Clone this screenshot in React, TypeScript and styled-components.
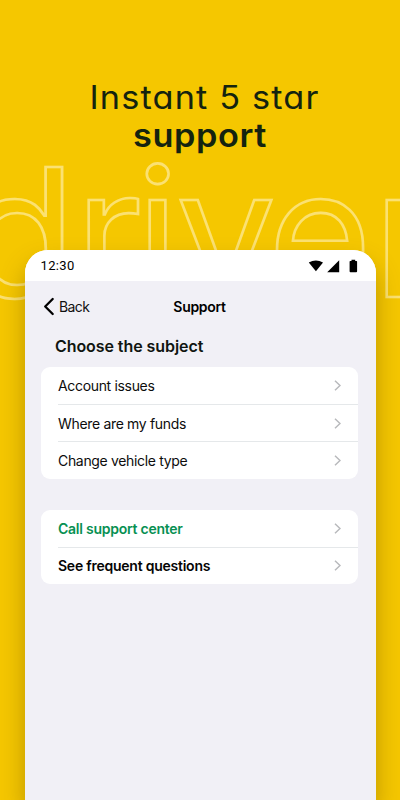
import React from "react";
import styled, { createGlobalStyle, css } from "styled-components";

const GlobalStyle = createGlobalStyle`
  * { box-sizing: border-box; }
  body { margin: 0; background: #f5c700; }
`;

const Page = styled.main`
  position: relative;
  width: 400px;
  height: 800px;
  overflow: hidden;
  background: #f5c700;
  display: flex;
  flex-direction: column;
  align-items: center;
  font-family: Inter, "Liberation Sans", sans-serif;
`;

const Wordmark = styled.svg`
  position: absolute;
  left: 0;
  top: 150px;
  width: 400px;
  height: 160px;

  text {
    font: 430 178px Inter, sans-serif;
    fill: none;
    stroke: #fbe172;
    stroke-width: 2.6px;
  }
`;

const Headline = styled.h1`
  position: relative;
  height: 250px;
  margin: 0;
  padding: 79px 0 0 10px;
  color: #14230f;
  font-size: 32px;
  line-height: 38px;
  font-weight: 400;
  text-align: center;
  white-space: nowrap;
  font-feature-settings: "cv11", "ss03";
`;

const HeadlineRow = styled.span<{ $strong?: boolean }>`
  display: block;
  letter-spacing: ${(p) => (p.$strong ? "0.6px" : "1.1px")};
  font-weight: ${(p) => (p.$strong ? 600 : 420)};
  margin-left: ${(p) => (p.$strong ? "-9px" : "0")};
  transform: scaleX(1.07);
`;

const Phone = styled.section`
  position: relative;
  width: 351px;
  height: 550px;
  flex: none;
  display: flex;
  flex-direction: column;
  border-radius: 23px 23px 0 0;
  background: #f1f0f6;
  box-shadow: 0 14px 24px rgba(110, 80, 0, 0.42);
`;

const StatusBar = styled.div`
  height: 31px;
  flex: none;
  display: flex;
  justify-content: space-between;
  align-items: center;
  padding: 0 18px 0 16px;
  border-radius: 23px 23px 0 0;
  background: #fff;
  font-family: Roboto, sans-serif;
  font-size: 13px;
  font-weight: 450;
  letter-spacing: 0.35px;
  color: #000;
`;

const StatusIcons = styled.svg`
  width: 50px;
  height: 14px;
`;

const NavBar = styled.nav`
  height: 50px;
  flex: none;
  display: grid;
  grid-template-columns: 1fr auto 1fr;
  align-items: center;
  padding: 0 19px 0 18px;
`;

const Back = styled.div`
  display: flex;
  align-items: center;
  gap: 4.5px;
  font-size: 14px;
  letter-spacing: -0.6px;
  color: #111;
`;

const BackIcon = styled.svg`
  width: 12px;
  height: 19px;
`;

const NavTitle = styled.div`
  font-size: 14px;
  font-weight: 600;
  letter-spacing: -0.3px;
`;

const Subject = styled.h2`
  height: 36px;
  flex: none;
  margin: 0 0 0 30.5px;
  font-size: 16px;
  line-height: 31px;
  font-weight: 600;
  letter-spacing: -0.07px;
  color: #101510;
`;

const List = styled.div`
  flex: none;
  width: 317px;
  margin: 0 0 31px 16.5px;
  padding-left: 17px;
  border-radius: 9px;
  background: #fff;
`;

const tones = {
  plain: css`
    font-weight: 400;
    color: #0c0c0c;
    letter-spacing: -0.33px;
  `,
  green: css`
    font-weight: 600;
    color: #079052;
    letter-spacing: -0.25px;
  `,
  strong: css`
    font-weight: 600;
    color: #050505;
    letter-spacing: -0.24px;
  `,
};

const Row = styled.div<{ $tone: keyof typeof tones }>`
  height: 37.2px;
  display: flex;
  align-items: center;
  justify-content: space-between;
  padding: 0 17px 0 0;
  font-size: 14px;
  ${(p) => tones[p.$tone]}

  & + & {
    border-top: 1px solid #e5e8ea;
  }
`;

const ChevronIcon = styled.svg`
  width: 7px;
  height: 11px;
`;

const Item = ({ label, tone = "plain" }: { label: string; tone?: keyof typeof tones }) => (
  <Row $tone={tone}>
    <span>{label}</span>
    <ChevronIcon viewBox="0 0 7 11">
      <path d="M1 .8 6 5.5 1 10.2" fill="none" stroke="#b8b9bc" strokeWidth="1.5" />
    </ChevronIcon>
  </Row>
);

export default function App() {
  return (
    <Page>
      <GlobalStyle />
      <Wordmark>
        <text transform="translate(-38 147) scale(1.05 1)">d</text>
        <text y="147" x="75 136 176 268 373">river</text>
      </Wordmark>
      <Headline>
        <HeadlineRow>Instant 5 star</HeadlineRow>
        <HeadlineRow $strong>support</HeadlineRow>
      </Headline>
      <Phone>
        <StatusBar>
          <span>12:30</span>
          <StatusIcons viewBox="0 0 50 14">
            <path d="M.8 3.5Q7.8-.7 15 3.5L7.9 12.2Z" />
            <path d="M19.2 13.2H31.2V1.2Z" />
            <path d="M43.5.7h3.7v1.2h1.2q.7 0 .7.7v9.7q0 .9-.9.9h-5.7q-.9 0-.9-.9V2.6q0-.7.7-.7h1.2Z" />
          </StatusIcons>
        </StatusBar>
        <NavBar>
          <Back>
            <BackIcon viewBox="0 0 12 19">
              <path
                d="M9.7 2 2.2 9.5 9.7 17"
                fill="none"
                stroke="#000"
                strokeWidth="2.3"
                strokeLinecap="round"
                strokeLinejoin="round"
              />
            </BackIcon>
            Back
          </Back>
          <NavTitle>Support</NavTitle>
        </NavBar>
        <Subject>Choose the subject</Subject>
        <List>
          <Item label="Account issues" />
          <Item label="Where are my funds" />
          <Item label="Change vehicle type" />
        </List>
        <List>
          <Item label="Call support center" tone="green" />
          <Item label="See frequent questions" tone="strong" />
        </List>
      </Phone>
    </Page>
  );
}
